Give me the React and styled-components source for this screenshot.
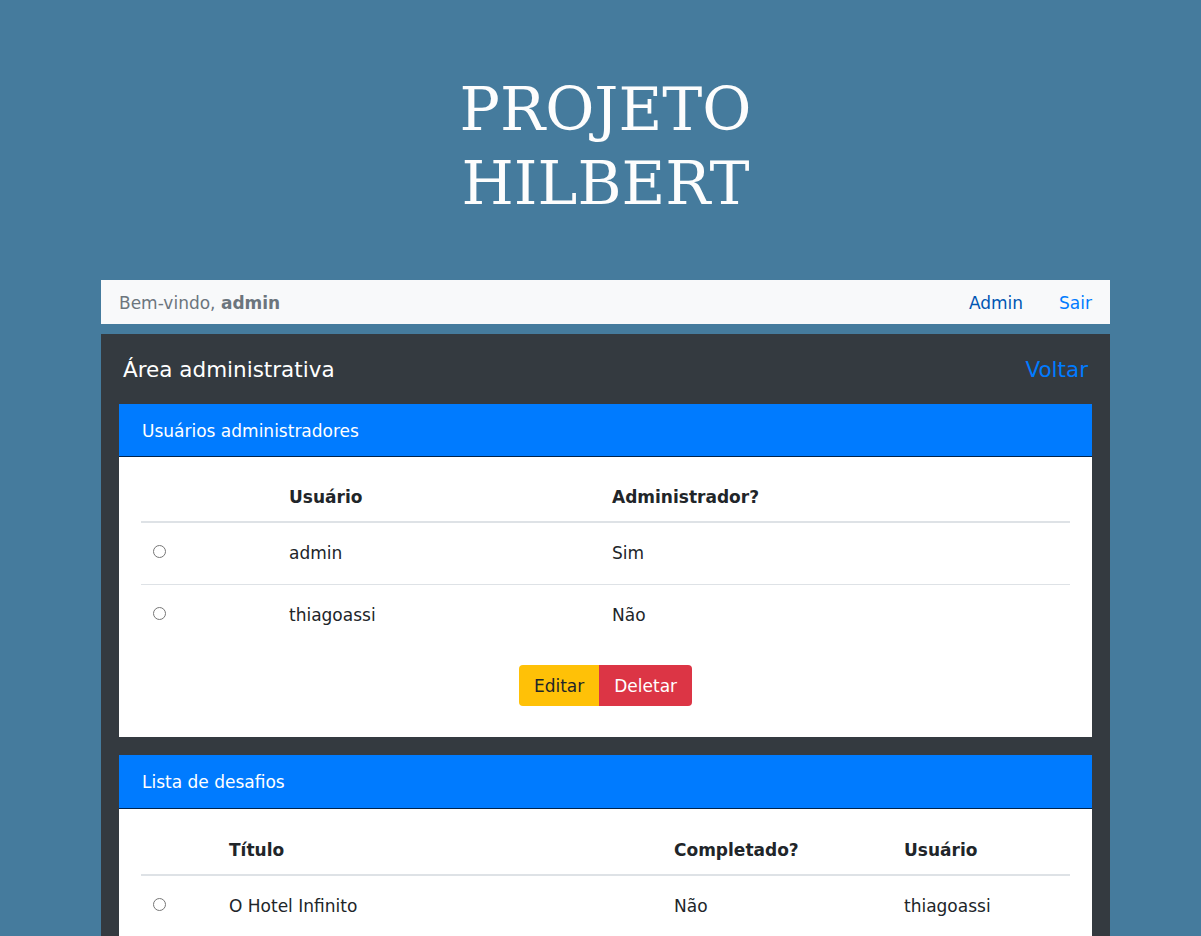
import React from 'react'
import styled, { createGlobalStyle } from 'styled-components'

const GlobalStyle = createGlobalStyle`
  body {
    margin: 0;
    background: #457b9d;
    font-family: "DejaVu Sans", "Noto Sans", sans-serif;
    color: #212529;
  }
`

const Page = styled.div`
  padding-left: 10px;
  padding-bottom: 40px;
`

const Header = styled.header`
  padding: 72px 0 60px;
  text-align: center;
`

const Title = styled.h1`
  margin: 0;
  font-family: "DejaVu Serif", "Liberation Serif", serif;
  font-weight: normal;
  font-size: 60px;
  line-height: 74px;
  letter-spacing: 0;
  color: #fdfdfd;
`

const Container = styled.div`
  width: 1009px;
  margin: 0 auto;
`

const NavBar = styled.nav`
  height: 44px;
  background: #f8f9fa;
  display: flex;
  align-items: center;
  padding: 2px 18px 0;
  box-sizing: border-box;
  font-size: 17px;
`

const Welcome = styled.span`
  color: #6c757d;
  flex: 1;
  b {
    font-weight: bold;
  }
`

const NavLinks = styled.div`
  display: flex;
  gap: 36px;
`

const NavLink = styled.a`
  color: ${({ $active }) => ($active ? '#0056b3' : '#007bff')};
  text-decoration: none;
`

const Panel = styled.section`
  margin-top: 10px;
  background: #343a40;
  padding: 18px 18px 0;
`

const PanelHead = styled.div`
  display: flex;
  justify-content: space-between;
  align-items: center;
  height: 34px;
  padding: 0 4px;
  margin-bottom: 18px;
  font-size: 21.5px;
`

const PanelTitle = styled.h2`
  margin: 0;
  font-size: 21.5px;
  font-weight: normal;
  color: #fff;
`

const BackLink = styled.a`
  color: #007bff;
  text-decoration: none;
`

const Card = styled.div`
  background: #fff;
  margin-bottom: 18px;
`

const CardHeader = styled.div`
  background: #007bff;
  color: #fff;
  display: flex;
  align-items: center;
  padding: 1px 23px 0;
  box-sizing: border-box;
  border-bottom: 1px solid rgba(0, 0, 0, 0.7);
  font-size: 17px;
  height: ${({ $h }) => $h || 53}px;
`

const CardBody = styled.div`
  padding: ${({ $top }) => $top || 16}px 22px ${({ $pad }) => $pad || 0}px;
`

const Table = styled.table`
  width: 100%;
  border-collapse: collapse;
  table-layout: fixed;
  font-size: 17px;
`

const Th = styled.th`
  text-align: left;
  font-weight: bold;
  padding: 12px;
  line-height: 24px;
  border-bottom: 2px solid #dee2e6;
`

const Td = styled.td`
  padding: 18px 12px 19px;
  line-height: 24px;
  vertical-align: middle;
  border-top: 1px solid #dee2e6;
  tr:first-child > & {
    border-top: none;
  }
`

const Radio = styled.input`
  margin: 0;
  width: 13px;
  height: 13px;
  vertical-align: middle;
  position: relative;
  top: -3px;
`

const Actions = styled.div`
  display: flex;
  justify-content: center;
  margin-top: 19px;
`

const Button = styled.button`
  border: none;
  font-family: inherit;
  font-size: 17px;
  height: 41px;
  padding: 0 15px;
  background: ${({ $variant }) => ($variant === 'danger' ? '#dc3545' : '#ffc107')};
  color: ${({ $variant }) => ($variant === 'danger' ? '#fff' : '#212529')};
  &:first-child {
    border-radius: 4px 0 0 4px;
  }
  &:last-child {
    border-radius: 0 4px 4px 0;
  }
`

const admins = [
  { user: 'admin', admin: 'Sim' },
  { user: 'thiagoassi', admin: 'Não' },
]

const challenges = [
  { title: 'O Hotel Infinito', done: 'Não', user: 'thiagoassi' },
]

export default function App() {
  return (
    <Page>
      <GlobalStyle />
      <Header>
        <Title>PROJETO<br />HILBERT</Title>
      </Header>
      <Container>
        <NavBar>
          <Welcome>Bem-vindo, <b>admin</b></Welcome>
          <NavLinks>
            <NavLink href="#" $active>Admin</NavLink>
            <NavLink href="#">Sair</NavLink>
          </NavLinks>
        </NavBar>
        <Panel>
          <PanelHead>
            <PanelTitle>Área administrativa</PanelTitle>
            <BackLink href="#">Voltar</BackLink>
          </PanelHead>

          <Card>
            <CardHeader>Usuários administradores</CardHeader>
            <CardBody $pad={31}>
              <Table>
                <colgroup>
                  <col style={{ width: 136 }} />
                  <col style={{ width: 323 }} />
                  <col />
                </colgroup>
                <thead>
                  <tr>
                    <Th />
                    <Th>Usuário</Th>
                    <Th>Administrador?</Th>
                  </tr>
                </thead>
                <tbody>
                  {admins.map(a => (
                    <tr key={a.user}>
                      <Td><Radio type="radio" name="admin" /></Td>
                      <Td>{a.user}</Td>
                      <Td>{a.admin}</Td>
                    </tr>
                  ))}
                </tbody>
              </Table>
              <Actions>
                <Button>Editar</Button>
                <Button $variant="danger">Deletar</Button>
              </Actions>
            </CardBody>
          </Card>

          <Card>
            <CardHeader $h={54}>Lista de desafios</CardHeader>
            <CardBody $top={17}>
              <Table>
                <colgroup>
                  <col style={{ width: 76 }} />
                  <col style={{ width: 445 }} />
                  <col style={{ width: 230 }} />
                  <col />
                </colgroup>
                <thead>
                  <tr>
                    <Th />
                    <Th>Título</Th>
                    <Th>Completado?</Th>
                    <Th>Usuário</Th>
                  </tr>
                </thead>
                <tbody>
                  {challenges.map(c => (
                    <tr key={c.title}>
                      <Td><Radio type="radio" name="challenge" /></Td>
                      <Td>{c.title}</Td>
                      <Td>{c.done}</Td>
                      <Td>{c.user}</Td>
                    </tr>
                  ))}
                </tbody>
              </Table>
            </CardBody>
          </Card>
        </Panel>
      </Container>
    </Page>
  )
}
